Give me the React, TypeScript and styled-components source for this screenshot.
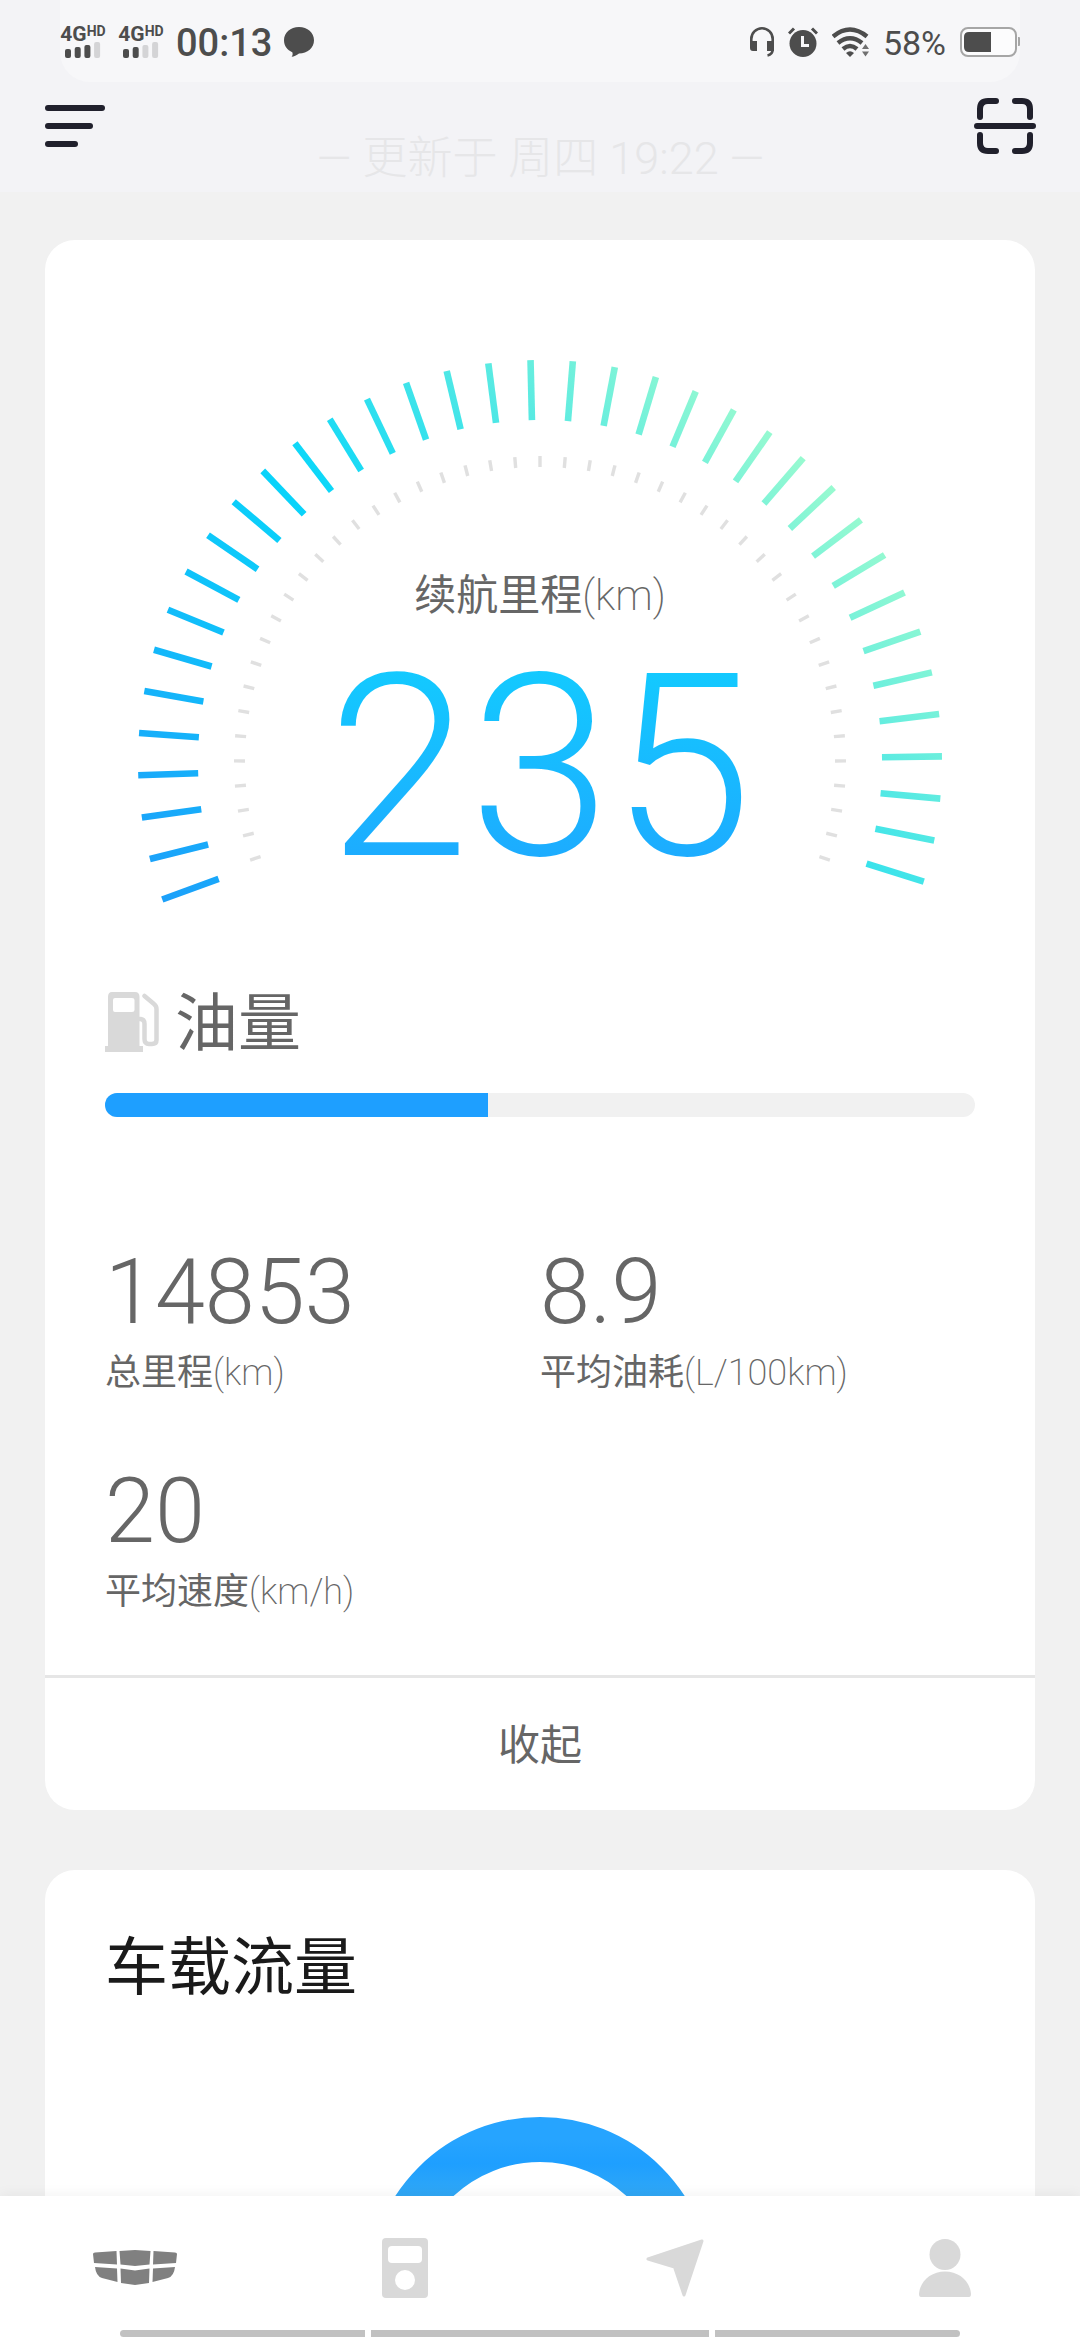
import React from 'react';
import styled, { createGlobalStyle } from 'styled-components';

const GlobalStyle = createGlobalStyle`
  *, *::before, *::after { box-sizing: border-box; }
  body {
    margin: 0;
    background: #f1f1f1;
    color: #666;
    font-family: Roboto, 'Noto Sans CJK SC', sans-serif;
    font-weight: 400;
  }
  button { border: 0; padding: 0; background: none; color: inherit; font: inherit; cursor: pointer; }
  svg { display: block; flex: none; }
`;

const Screen = styled.div`
  display: flex;
  flex-direction: column;
  height: 100vh;
`;

/* ---------- header ---------- */

const Header = styled.header`
  background: #f3f3f6;
`;

const StatusBar = styled.div`
  display: flex;
  justify-content: space-between;
  align-items: center;
  height: 82px;
  margin: 0 60px;
  padding-top: 2px;
  border-radius: 0 0 30px 30px;
  background: #f7f7f9;
  color: #4d4d4d;
`;

const StatusGroup = styled.div<{ $gap: number }>`
  display: flex;
  align-items: center;
  gap: ${(p) => p.$gap}px;
`;

const Signal = styled.div`
  display: flex;
  flex-direction: column;
  align-items: center;
  gap: 1px;
  width: 46px;
`;

const Network = styled.span`
  display: flex;
  align-items: flex-start;
  font-size: 21px;
  line-height: 14px;
  font-weight: 700;
`;

const NetworkTag = styled.span`
  font-size: 14px;
  line-height: 9px;
`;

const Clock = styled.time`
  padding-top: 2px;
  font-size: 38px;
  line-height: 40px;
  font-weight: 500;
`;

const Percent = styled.span`
  padding-top: 2px;
  font-size: 34px;
  line-height: 40px;
  font-weight: 400;
`;

const Toolbar = styled.div`
  display: flex;
  justify-content: space-between;
  height: 110px;
  padding: 14px 44px 0 45px;
`;

const ToolButton = styled.button`
  display: grid;
  place-items: center;
  width: 62px;
  height: 60px;
`;

const Updated = styled.p`
  margin: 0;
  padding-top: 33px;
  font-size: 45px;
  line-height: 60px;
  font-weight: 300;
  color: #e6e6e8;
`;

/* ---------- content ---------- */

const Content = styled.main`
  flex: 1;
  min-height: 0;
  display: flex;
  flex-direction: column;
  gap: 60px;
  padding: 48px 45px 0;
  overflow-y: auto;
  scrollbar-width: none;
`;

const Card = styled.section`
  flex: none;
  border-radius: 30px;
  background: #fff;
`;

const CardBody = styled.div`
  padding: 120px 60px 51px;
`;

const Gauge = styled.div`
  display: grid;
  justify-items: center;
  > * { grid-area: 1 / 1; }
`;

const Readout = styled.div`
  display: flex;
  flex-direction: column;
  align-items: center;
  gap: 22px;
  padding-top: 206px;
`;

const ReadoutLabel = styled.span`
  font-size: 42px;
  line-height: 60px;
`;

const Unit = styled.span`
  font-weight: 200;
`;

const ReadoutValue = styled.strong`
  font-size: 255px;
  line-height: 240px;
  font-weight: 300;
  background: linear-gradient(#12cdff, #1ea7ff);
  background-clip: text;
  -webkit-background-clip: text;
  color: transparent;
`;

const FuelHeading = styled.h2`
  display: flex;
  align-items: center;
  gap: 14px;
  margin: 75px 0 28px;
  font-size: 63px;
  line-height: 86px;
  font-weight: 400;
`;

const FuelName = styled.span`
  padding-top: 3px;
  line-height: 83px;
`;

const Track = styled.div`
  height: 24px;
  border-radius: 12px;
  background: #f1f1f1;
  overflow: hidden;
`;

const TrackFill = styled.div`
  height: 100%;
  background: #1e9fff;
`;

const Stats = styled.dl`
  display: grid;
  grid-template-columns: 1fr 1fr;
  row-gap: 59px;
  margin: 128px 0 0;
`;

const Stat = styled.div`
  display: flex;
  flex-direction: column-reverse;
`;

const StatLabel = styled.dt`
  font-size: 36px;
  line-height: 64px;
`;

const StatValue = styled.dd`
  margin: 0;
  font-size: 90px;
  line-height: 96px;
  font-weight: 300;
`;

const Collapse = styled.button`
  width: 100%;
  height: 135px;
  padding-top: 4px;
  border-top: 3px solid #e6e6e6;
  font-size: 42px;
  line-height: 60px;
`;

const TrafficCard = styled(Card)`
  padding: 51px 60px 60px;
`;

const TrafficTitle = styled.h2`
  margin: 0 0 102px;
  font-size: 63px;
  line-height: 94px;
  font-weight: 400;
  color: #1a1a1a;
`;

const Ring = styled.div`
  display: flex;
  justify-content: center;
`;

/* ---------- bottom navigation ---------- */

const TabBar = styled.nav`
  position: relative;
  display: grid;
  grid-template-columns: repeat(4, 1fr);
  height: 144px;
  background: #fff;
  box-shadow: 0 -2px 12px rgba(0, 0, 0, 0.05);
`;

const Tab = styled.button<{ $active?: boolean }>`
  display: grid;
  place-items: center;
  color: ${(p) => (p.$active ? '#808080' : '#d9d9d9')};
`;

const HomeIndicator = styled.div`
  position: absolute;
  inset: auto 120px 3px;
  display: grid;
  grid-template-columns: 245fr 338fr 245fr;
  gap: 6px;
  height: 7px;
  border-radius: 4px;
  overflow: hidden;
  pointer-events: none;
`;

const IndicatorPart = styled.span`
  background: #c1c1c1;
`;

/* ---------- drawings ---------- */

const SignalBars = ({ level }: { level: number }) => (
  <svg width="36" height="16" viewBox="0 0 36 16" fill="currentColor">
    {[9, 11, 13, 16].map((h, i) => (
      <rect key={h} x={i * 9.7} y={16 - h} width="6" height={h} rx="2" opacity={i < level ? 1 : 0.2} />
    ))}
  </svg>
);

const ChatIcon = () => (
  <svg width="30" height="30" viewBox="0 0 30 30" fill="currentColor">
    <path d="M15 0C23.5 0 30 5.8 30 13.3S23.500 26.500 15 26.500C12.500 28.600 10 29.600 7.600 29.800C8.700 28.500 8.900 26.800 8.300 25.200C3.300 23.200 0 18.800 0 13.300C0 5.800 6.500 0 15 0Z" />
  </svg>
);

const HeadsetIcon = () => (
  <svg width="24" height="30" viewBox="0 0 24 30">
    <path d="M1.300 17V12A10.700 10.700 0 0 1 22.700 12V22Q22.700 27.500 17.500 28.500" fill="none" stroke="currentColor" strokeWidth="2.600" />
    <path d="M0 14H7V24H3Q0 24 0 21ZM17 14H24V24H17Z" fill="currentColor" />
  </svg>
);

const AlarmIcon = () => (
  <svg width="30" height="30" viewBox="0 0 30 30">
    <circle cx="15" cy="16.500" r="13.500" fill="currentColor" />
    <path d="M1 6.500L6 1.500M29 6.500L24 1.500" stroke="currentColor" strokeWidth="3" />
    <path d="M14.500 9V18.500H21" fill="none" stroke="#f7f7f9" strokeWidth="3" />
  </svg>
);

const WifiIcon = () => (
  <svg width="37" height="30" viewBox="0 0 37 30" fill="none" stroke="currentColor" strokeWidth="4.500">
    <path d="M1 9.500Q18 -4.500 35 9.500" />
    <path d="M6 16Q18 6.500 30 16" />
    <path d="M11 22Q18 16 25 22" />
    <path d="M14 26Q18 22.500 22 26L18 30Z" fill="currentColor" stroke="none" />
    <path d="M30 22L33.500 17L37 22ZM30 24.500L33.500 29.500L37 24.500Z" fill="currentColor" stroke="none" opacity="0.8" />
  </svg>
);

const BatteryIcon = () => (
  <svg width="60" height="30" viewBox="0 0 60 30">
    <rect x="1" y="1" width="55" height="28" rx="7" fill="#fcfcfd" stroke="#a6a6a6" strokeWidth="2" />
    <path d="M9 5H31V25H9Q4 25 4 20V10Q4 5 9 5Z" fill="currentColor" />
    <path d="M58 10H59Q60 10 60 11V18Q60 19 59 19H58Z" fill="#a6a6a6" />
  </svg>
);

const MenuIcon = () => (
  <svg width="62" height="42" viewBox="0 0 62 42" fill="#20202c">
    <rect width="60" height="6" rx="3" />
    <rect y="18" width="48" height="6" rx="3" />
    <rect y="36" width="33" height="6" rx="3" />
  </svg>
);

const ScanIcon = () => (
  <svg width="62" height="58" viewBox="0 0 62 58" fill="none" stroke="#20202c" strokeWidth="6" strokeLinecap="round">
    <path d="M3 29H59M6 20V12Q6 4 14 4H22M41 4H48Q56 4 56 12V20M56 38V46Q56 54 48 54H41M22 54H14Q6 54 6 46V38" />
  </svg>
);

const FuelIcon = () => (
  <svg width="56" height="60" viewBox="0 0 56 60" fill="#d9d9d9">
    <path fillRule="evenodd" d="M7 0H30Q34.500 0 34.500 5V54H38V60H0V54H3V5Q3 0 7 0ZM10 6Q8 6 8 8V18Q8 20 10 20H27Q29.500 20 29.500 18V8Q29.500 6 27 6Z" />
    <path d="M34 27H35Q39.500 27 39.500 32V47Q39.500 52 44 52H47Q51.500 52 51.500 48V17Q51.500 14 49 12L39.500 4" fill="none" stroke="#d9d9d9" strokeWidth="4.500" strokeLinecap="round" />
  </svg>
);

const GrilleIcon = () => (
  <svg width="84" height="36" viewBox="0 0 84 36" fill="currentColor">
    <path d="M0 4Q0 2.500 2 2.400L23.500 1L24 14.500L1 13ZM26.500 1L42 0L57.500 1L56.500 14.500L42 16L27.500 14.500ZM60.500 1L82 2.400Q84 2.500 84 4L83 13L60 14.500ZM2 17L24 18.500L24.500 32L9 28Q3 26 2 17ZM27.500 18.500L42 20.500L56.500 18.500L56 33L42 35L28 33ZM60 18.500L82 17Q81 26 75 28L59.500 32Z" />
  </svg>
);

const DeviceIcon = () => (
  <svg width="46" height="60" viewBox="0 0 46 60" fill="currentColor">
    <rect width="46" height="60" rx="4" />
    <rect x="6" y="8" width="34" height="17" rx="4" fill="#fff" />
    <circle cx="23" cy="42" r="10" fill="#fff" />
  </svg>
);

const ArrowIcon = () => (
  <svg width="58" height="58" viewBox="0 0 58 58" fill="currentColor" stroke="currentColor" strokeWidth="3" strokeLinejoin="round">
    <path d="M2 20L56 2L38 56L28.500 28Z" />
  </svg>
);

const PersonIcon = () => (
  <svg width="52" height="58" viewBox="0 0 52 58" fill="currentColor">
    <circle cx="26" cy="15.500" r="15.500" />
    <path d="M0 55C1 42 12 32.500 26 32.500S51 42 52 55Q52 58 50 58H2Q0 58 0 55Z" />
  </svg>
);

const polar = (deg: number, r: number) => {
  const a = (deg * Math.PI) / 180;
  return { x: 402 + r * Math.sin(a), y: 402 - r * Math.cos(a) };
};

type TickProps = { from: number; to: number; count: number; outer: number; inner: number; width: number; stroke: string };

const Ticks = ({ from, to, count, outer, inner, width, stroke }: TickProps) => (
  <g stroke={stroke} strokeWidth={width}>
    {Array.from({ length: count }, (_, i) => {
      const deg = from + ((to - from) * i) / (count - 1);
      const a = polar(deg, outer);
      const b = polar(deg, inner);
      return <line key={i} x1={a.x} y1={a.y} x2={b.x} y2={b.y} />;
    })}
  </g>
);

const GaugeDial = () => (
  <svg width="804" height="544" viewBox="0 0 804 544">
    <defs>
      <linearGradient id="dial" gradientUnits="userSpaceOnUse" x1="118" y1="686" x2="686" y2="118">
        <stop offset="0" stopColor="#1e9bfa" />
        <stop offset="0.540" stopColor="#08d6fa" />
        <stop offset="1" stopColor="#98fad0" />
      </linearGradient>
    </defs>
    <Ticks from={-110} to={107.3} count={37} outer={402} inner={342} width={6.6} stroke="url(#dial)" />
    <Ticks from={-108.7} to={108.7} count={47} outer={306} inner={295} width={3.4} stroke="#e0e0e0" />
  </svg>
);

const RingChart = () => (
  <svg width="344" height="344" viewBox="0 0 344 344">
    <defs>
      <linearGradient id="ring" x1="0" y1="0" x2="0" y2="1">
        <stop offset="0" stopColor="#26a4ff" />
        <stop offset="0.080" stopColor="#1e9fff" />
        <stop offset="0.230" stopColor="#38abf2" />
        <stop offset="1" stopColor="#98fad0" />
      </linearGradient>
    </defs>
    <circle cx="172" cy="172" r="149.500" fill="none" stroke="url(#ring)" strokeWidth="45" />
  </svg>
);

/* ---------- page ---------- */

const stats = [
  { label: '总里程', unit: '(km)', value: '14853' },
  { label: '平均油耗', unit: '(L/100km)', value: '8.9' },
  { label: '平均速度', unit: '(km/h)', value: '20' },
];

const tabs = [
  { name: '车辆', icon: <GrilleIcon />, active: true },
  { name: '设备', icon: <DeviceIcon /> },
  { name: '导航', icon: <ArrowIcon /> },
  { name: '我的', icon: <PersonIcon /> },
];

const fuelLevel = 44;

export default function App() {
  return (
    <Screen>
      <GlobalStyle />
      <Header>
        <StatusBar>
          <StatusGroup $gap={12}>
            {[3, 2].map((level) => (
              <Signal key={level}>
                <Network>4G<NetworkTag>HD</NetworkTag></Network>
                <SignalBars level={level} />
              </Signal>
            ))}
            <Clock>00:13</Clock>
            <ChatIcon />
          </StatusGroup>
          <StatusGroup $gap={14}>
            <HeadsetIcon />
            <AlarmIcon />
            <WifiIcon />
            <Percent>58%</Percent>
            <BatteryIcon />
          </StatusGroup>
        </StatusBar>
        <Toolbar>
          <ToolButton aria-label="菜单"><MenuIcon /></ToolButton>
          <Updated>— 更新于 周四 19:22 —</Updated>
          <ToolButton aria-label="扫一扫"><ScanIcon /></ToolButton>
        </Toolbar>
      </Header>

      <Content>
        <Card>
          <CardBody>
            <Gauge>
              <GaugeDial />
              <Readout>
                <ReadoutLabel>续航里程<Unit>(km)</Unit></ReadoutLabel>
                <ReadoutValue>235</ReadoutValue>
              </Readout>
            </Gauge>
            <FuelHeading><FuelIcon /><FuelName id="fuel">油量</FuelName></FuelHeading>
            <Track role="progressbar" aria-labelledby="fuel" aria-valuenow={fuelLevel} aria-valuemin={0} aria-valuemax={100}>
              <TrackFill style={{ width: `${fuelLevel}%` }} />
            </Track>
            <Stats>
              {stats.map((s) => (
                <Stat key={s.label}>
                  <StatLabel>{s.label}<Unit>{s.unit}</Unit></StatLabel>
                  <StatValue>{s.value}</StatValue>
                </Stat>
              ))}
            </Stats>
          </CardBody>
          <Collapse>收起</Collapse>
        </Card>

        <TrafficCard>
          <TrafficTitle>车载流量</TrafficTitle>
          <Ring><RingChart /></Ring>
        </TrafficCard>
      </Content>

      <TabBar>
        {tabs.map((t) => (
          <Tab key={t.name} aria-label={t.name} $active={t.active}>{t.icon}</Tab>
        ))}
        <HomeIndicator>
          <IndicatorPart />
          <IndicatorPart />
          <IndicatorPart />
        </HomeIndicator>
      </TabBar>
    </Screen>
  );
}
